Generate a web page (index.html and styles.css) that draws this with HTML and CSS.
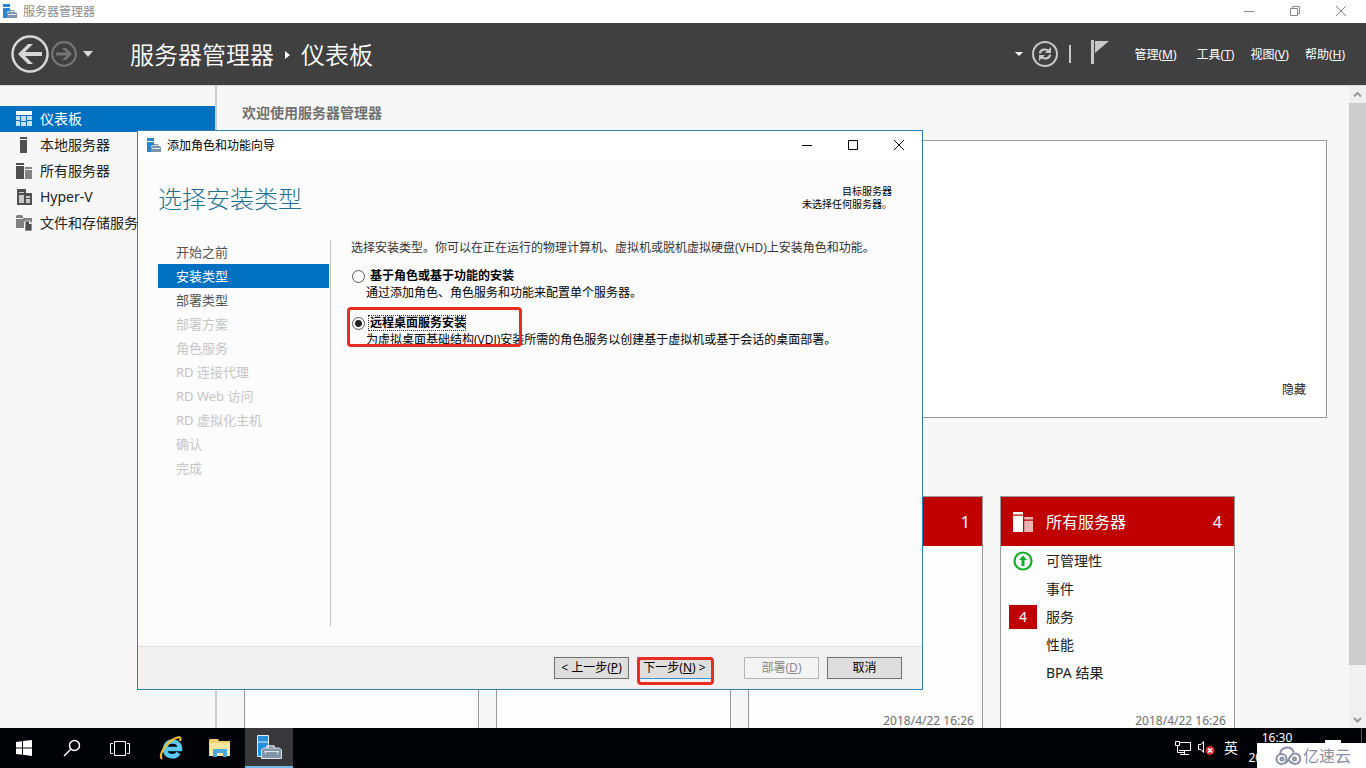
FILE: index.html
```html
<!DOCTYPE html>
<html lang="zh-CN">
<head>
<meta charset="utf-8">
<title>服务器管理器</title>
<link rel="stylesheet" href="styles.css">
</head>
<body>
<svg class="defs" aria-hidden="true">
  <symbol id="app" viewBox="0 0 15 15">
    <path fill="#2a86d0" d="M0 0h7v3H0zM0 4h7v3L4 8v6H0z"/>
    <path fill="#7d93ab" d="M4 9l2-1h6l2 1v5H4z"/>
    <path fill="none" stroke="#7d93ab" d="M7 8V6.500h4V8"/>
    <path stroke="#dfe8f0" d="M5 10.500h8"/>
  </symbol>
  <symbol id="servers" viewBox="0 0 16 16">
    <path fill="currentColor" d="M0 0h8v2H0zM0 3h8v13H0z"/>
    <path fill="currentColor" opacity=".7" d="M9 4h7v2H9zM9 7h7v9H9z"/>
  </symbol>
</svg>

<header class="titlebar">
  <svg class="app-icon" viewBox="0 0 15 15"><use href="#app"/></svg>
  <span class="titlebar-text">服务器管理器</span>
  <div class="caption">
    <button class="cap" aria-label="最小化"><svg viewBox="0 0 12 12"><path d="M1 6.500h10"/></svg></button>
    <button class="cap" aria-label="还原"><svg viewBox="0 0 12 12"><path d="M1.500 3.500h7v7h-7zM3.500 3V1.500h7v7H9"/></svg></button>
    <button class="cap" aria-label="关闭"><svg viewBox="0 0 12 12"><path d="M1 1l10 10M11 1L1 11"/></svg></button>
  </div>
</header>

<div class="toolbar">
  <button class="bare" aria-label="后退"><svg width="38" height="38" viewBox="0 0 38 38"><circle cx="19" cy="19" r="17.500" fill="none" stroke="#d6d6d6" stroke-width="2.500"/><path d="M7 19l10-10h5l-8 8h17v4H14l8 8h-5z" fill="#d6d6d6"/></svg></button>
  <button class="bare" aria-label="前进"><svg width="26" height="26" viewBox="0 0 26 26"><circle cx="13" cy="13" r="11.800" fill="none" stroke="#757575" stroke-width="2.200"/><path d="M21 13l-6-6h-4l4.500 4.500H5v3h10.500L11 19h4z" fill="#757575"/></svg></button>
  <button class="bare history" aria-label="历史记录"><svg width="12" height="6" viewBox="0 0 12 6"><path d="M1 0h10L6 6z" fill="#d6d6d6"/></svg></button>
  <div class="crumbs"><span>服务器管理器</span><svg width="5" height="8" viewBox="0 0 5 8"><path d="M0 0l5 4-5 4z" fill="#fff"/></svg><span>仪表板</span></div>
  <div class="actions">
    <button class="bare" aria-label="更多"><svg width="8" height="4" viewBox="0 0 8 4"><path d="M0 0h8L4 4z" fill="#fff"/></svg></button>
    <button class="bare" aria-label="刷新"><svg width="26" height="26" viewBox="0 0 26 26"><circle cx="13" cy="13" r="12" fill="none" stroke="#c8c8c8" stroke-width="2"/><g fill="none" stroke="#c8c8c8" stroke-width="2.200"><path d="M8 12.500c0-4 6-5.500 9-2"/><path d="M18 13.500c0 4-6 5.500-9 2"/></g><path fill="#c8c8c8" d="M19 6v6h-6zM7 20v-6h6z"/></svg></button>
    <span class="divider"></span>
    <button class="bare flag" aria-label="通知"><svg width="18" height="24" viewBox="0 0 18 24"><path fill="#c8c8c8" d="M0 0h3v24H0zM4 1h14L4 13z"/></svg></button>
    <nav class="menu">
      <button>管理(<u>M</u>)</button><button>工具(<u>T</u>)</button><button>视图(<u>V</u>)</button><button>帮助(<u>H</u>)</button>
    </nav>
  </div>
</div>

<div class="main">
  <nav class="sidebar">
    <a class="side current" href="#"><svg viewBox="0 0 16 16"><path fill="#fff" d="M0 0h16v4H0z"/><path fill="#c5def2" d="M0 5h4v4H0zM5 5h5v5H5zM11 5h5v4h-5zM0 10h4v5H0zM5 11h5v4H5zM11 10h5v5h-5z"/></svg>仪表板</a>
    <a class="side" href="#"><svg viewBox="0 0 16 16"><path fill="#505050" d="M4 0h7v2H4zM4 3h7v13H4z"/></svg>本地服务器</a>
    <a class="side" href="#"><svg viewBox="0 0 16 16"><use href="#servers"/></svg>所有服务器</a>
    <a class="side" href="#"><svg viewBox="0 0 16 16"><path fill="#505050" d="M1 0h9v4h6v12H1z"/><path fill="#c8c8c8" d="M3 3h5v1H3zM3 6h5v8H3zM10 7h4v2h-4zM10 10h4v4h-4z"/></svg>Hyper-V</a>
    <a class="side" href="#"><svg viewBox="0 0 16 16"><path fill="#808080" d="M0 1l1-1h5l1 1v2h9v4H8v6H0z"/><path fill="#f7f7f7" d="M0 3h7v1H0z"/><path fill="#505050" stroke="#f7f7f7" stroke-width=".7" d="M9 6h5l2 2v8H9z"/><path fill="#fff" d="M13 6v3h3z"/></svg>文件和存储服务</a>
  </nav>
  <main class="content">
    <h2 class="welcome-title">欢迎使用服务器管理器</h2>
    <section class="welcome"><button class="hide">隐藏</button></section>
    <div class="tiles">
      <section class="tile"><div class="tile-head"></div><div class="tile-foot"></div></section>
      <section class="tile"><div class="tile-head"></div><div class="tile-foot"></div></section>
      <section class="tile"><div class="tile-head"><span class="count">1</span></div><div class="tile-foot">2018/4/22 16:26</div></section>
      <section class="tile">
        <div class="tile-head"><svg width="20" height="20" viewBox="0 0 16 16"><use href="#servers"/></svg><span>所有服务器</span><span class="count">4</span></div>
        <ul class="rows">
          <li><span class="mark"><svg width="20" height="20" viewBox="0 0 20 20"><circle cx="10" cy="10" r="8.500" fill="none" stroke="#12ad2b" stroke-width="2.200"/><path fill="#12ad2b" d="M10 4.500l4 4.500h-2.500v6h-3V9H6z"/></svg></span>可管理性</li>
          <li><span class="mark"></span>事件</li>
          <li><span class="mark"><b class="alert">4</b></span>服务</li>
          <li><span class="mark"></span>性能</li>
          <li><span class="mark"></span>BPA 结果</li>
        </ul>
        <div class="tile-foot">2018/4/22 16:26</div>
      </section>
    </div>
  </main>
  <div class="scroll" aria-hidden="true">
    <svg viewBox="0 0 17 17"><path d="M5 10.500L8.500 7l3.500 3.500"/></svg>
    <div class="thumb"></div>
    <svg viewBox="0 0 17 17"><path d="M5 7l3.500 3.500L12 7"/></svg>
  </div>
</div>

<div class="dialog" role="dialog" aria-labelledby="dlg">
  <div class="dlg-title">
    <svg class="app-icon" viewBox="0 0 15 15"><use href="#app"/></svg><span id="dlg">添加角色和功能向导</span>
    <div class="caption dark">
      <button class="cap" aria-label="最小化"><svg viewBox="0 0 12 12"><path d="M1 6.500h10"/></svg></button>
      <button class="cap" aria-label="最大化"><svg viewBox="0 0 12 12"><path d="M1.500 1.500h9v9h-9z"/></svg></button>
      <button class="cap" aria-label="关闭"><svg viewBox="0 0 12 12"><path d="M1 1l10 10M11 1L1 11"/></svg></button>
    </div>
  </div>
  <div class="dlg-head">
    <h1>选择安装类型</h1>
    <p class="dest">目标服务器<br>未选择任何服务器。</p>
  </div>
  <div class="dlg-body">
    <ol class="steps">
      <li>开始之前</li><li class="active">安装类型</li><li>部署类型</li>
      <li class="off">部署方案</li><li class="off">角色服务</li><li class="off">RD 连接代理</li><li class="off">RD Web 访问</li><li class="off">RD 虚拟化主机</li><li class="off">确认</li><li class="off">完成</li>
    </ol>
    <div class="options">
      <p class="intro">选择安装类型。你可以在正在运行的物理计算机、虚拟机或脱机虚拟硬盘(VHD)上安装角色和功能。</p>
      <div class="option">
        <div class="choice"><input type="radio" name="kind" id="k1"><label for="k1">基于角色或基于功能的安装</label></div>
        <p>通过添加角色、角色服务和功能来配置单个服务器。</p>
      </div>
      <div class="option">
        <div class="choice"><input type="radio" name="kind" id="k2" checked><label for="k2" class="focused">远程桌面服务安装</label></div>
        <p>为虚拟桌面基础结构(VDI)安装所需的角色服务以创建基于虚拟机或基于会话的桌面部署。</p>
        <span class="outline outline-option"></span>
      </div>
    </div>
  </div>
  <div class="dlg-foot">
    <button class="btn">&lt; 上一步(<u>P</u>)</button>
    <div class="next"><button class="btn primary">下一步(<u>N</u>) &gt;</button><span class="outline outline-next"></span></div>
    <button class="btn deploy" disabled>部署(<u>D</u>)</button>
    <button class="btn">取消</button>
  </div>
</div>

<footer class="taskbar">
  <button class="task" aria-label="开始"><svg width="16" height="16" viewBox="0 0 16 16"><path fill="#fff" d="M0 2l6-.8v6.300H0zM7 1l9-1v7.500H7zM0 8.500h6v6.300L0 14zM7 8.500h9V16l-9-1.200z"/></svg></button>
  <button class="task" aria-label="搜索"><svg width="18" height="18" viewBox="0 0 18 18"><g fill="none" stroke="#fff" stroke-width="1.500"><circle cx="11.500" cy="6.500" r="5"/><path d="M8 10l-7 7"/></g></svg></button>
  <button class="task" aria-label="任务视图"><svg width="20" height="15" viewBox="0 0 20 15"><path fill="none" stroke="#fff" d="M4.500.5h11v14h-11zM3 2.500H.5v10H3M17 2.500h2.500v10H17"/></svg></button>
  <div class="pinned">
    <button class="task" aria-label="Internet Explorer"><svg width="24" height="24" viewBox="0 0 24 24"><path fill="none" stroke="#5cc8f5" stroke-width="4.500" d="M5.500 13h15.500c0-5-3.500-7.500-7.500-7.500A7 7.500 0 0 0 6 13c0 8 10 9.500 13.500 4"/><path fill="none" stroke="#f4c430" stroke-width="2" d="M3 23C-1 19 7 7 15 3c4-2.500 8-3 6 2"/></svg></button>
    <button class="task" aria-label="文件资源管理器"><svg width="22" height="20" viewBox="0 0 22 20"><path fill="#f0cf6b" d="M0 2l1-1h8l1 2h11v15H0z"/><path fill="#fbe7a0" d="M1 5h20v13H1z"/><path fill="#49a9dc" d="M4 11h14v8h-4v-4H8v4H4z"/></svg></button>
    <button class="task open" aria-label="服务器管理器"><svg width="25" height="25" viewBox="0 0 25 25"><path fill="#2190e0" stroke="#d8ecfa" d="M.5.500h11v21H.5z"/><path stroke="#d8ecfa" d="M1 7h10"/><path fill="none" stroke="#d8e0e8" stroke-width="1.500" d="M10 13v-2h7v2"/><path fill="#8295a7" stroke="#dce3ea" d="M4.500 15l2-2h16l2 2v8.500h-20z"/><path stroke="#dce3ea" d="M7 16.500h15M8.500 17v2M20.500 17v2"/></svg></button>
  </div>
  <div class="tray">
    <svg width="16" height="14" viewBox="0 0 16 14"><path fill="none" stroke="#fff" d="M5 1.500h10.500v8H4M9.500 10v3M5 13.500h9M.5.500h4v4h-4zM2.500 5v6.500H9"/></svg>
    <svg width="17" height="16" viewBox="0 0 17 16"><path fill="none" stroke="#fff" d="M5.500 12.500L3 9.500H.5v-5H3l2.500-3z"/><circle cx="12" cy="10.500" r="4.500" fill="#df2b35"/><path stroke="#fff" stroke-width="1.500" d="M10 8.500l4 4M14 8.500l-4 4"/></svg>
    <span class="ime">英</span>
    <time class="clock">16:30<br>2018/4/22</time>
    <span class="peek"></span>
  </div>
  <span class="note"></span>
  <div class="brand">
    <svg width="26" height="20" viewBox="0 0 26 20"><g fill="none" stroke="#8b8fa3" stroke-width="2"><path d="M5 8.500C5 4 8.500 1.500 12 1.500c3.500 0 6 2 6.500 5"/><circle cx="6.500" cy="13" r="5"/><path d="M10 17c4-1 5-10 10-9.500a5 5 0 0 1 0 10.500c-3 0-4-1.500-6-3.500"/><circle cx="7" cy="13" r="1.500"/><circle cx="19.500" cy="13" r="1.500"/></g></svg>
    <span>亿速云</span>
  </div>
</footer>
</body>
</html>
```

FILE: styles.css
```css
* { box-sizing: border-box; }
html, body { height: 100%; }
body {
  margin: 0;
  display: flex;
  flex-direction: column;
  position: relative;
  overflow: hidden;
  background: #f7f7f7;
  color: #222;
  font: 14px/20px "Noto Sans", "Noto Sans CJK SC", sans-serif;
}
button { font: inherit; color: inherit; padding: 0; border: 0; background: none; }
h1, h2, p, ol, ul { margin: 0; padding: 0; }
ol, ul { list-style: none; }
svg { display: block; flex: none; }
.defs { position: absolute; width: 0; height: 0; }

/* window frame */
.titlebar { display: flex; align-items: center; height: 23px; padding: 0 2px 0 3px; background: #fff; color: #8a8a8a; font-size: 12px; flex: none; }
.app-icon { width: 15px; height: 15px; margin-right: 5px; }
.caption { display: flex; margin-left: auto; color: #888; }
.cap { width: 46px; height: 20px; padding-bottom: 2px; display: grid; place-items: center; }
.cap svg { width: 12px; height: 12px; fill: none; stroke: currentColor; }
.caption.dark { color: #000; }

.toolbar { display: flex; align-items: center; height: 62px; padding: 0 21px 0 11px; background: #404040; color: #fff; flex: none; }
.bare { display: block; }
.toolbar .bare + .bare { margin-left: 2px; }
.toolbar .bare + .history { margin-left: 5px; }
.crumbs { display: flex; align-items: center; gap: 11px; margin-left: 36px; padding-top: 1px; font-size: 24px; line-height: 32px; font-weight: 350; }
.actions { display: flex; align-items: center; margin-left: auto; font-size: 12px; }
.toolbar .actions .bare + .bare { margin-left: 9px; }
.divider { width: 2px; height: 18px; margin: 0 20px 0 11px; background: #c8c8c8; }
.flag { margin: -4px 25px 0 0; }
.menu { display: flex; gap: 16px; padding-top: 1px; }
.menu button:first-child { margin-right: 4px; }

/* main area */
.main { display: flex; flex: 1; min-height: 0; border-top: 1px solid #d9d9d9; }
.sidebar { width: 217px; flex: none; padding-top: 20px; border-right: 2px solid #cfcfcf; }
.side { display: flex; align-items: center; gap: 8px; height: 26px; padding-left: 16px; color: #222; text-decoration: none; white-space: nowrap; }
.side svg { width: 16px; height: 16px; color: #505050; }
.side.current { background: #0070c0; color: #fff; }
.content { flex: 1; min-width: 0; overflow: hidden; padding: 16px 22px 0 27px; }
.welcome-title { margin-left: -2px; font-size: 14px; line-height: 22px; font-weight: 700; color: #707070; }
.welcome { display: flex; align-items: flex-end; justify-content: flex-end; height: 278px; margin-top: 16px; padding: 0 20px 17px; border: 1px solid #999; background: #fff; font-size: 12px; }
.tiles { display: flex; gap: 17px; margin-top: 78px; }
.tile { display: flex; flex-direction: column; width: 235px; height: 232px; flex: none; border: 1px solid #999; border-bottom: 0; background: #fdfdfd; }
.tile-head { display: flex; align-items: center; gap: 13px; height: 49px; padding: 0 12px; background: #c00000; color: #fff; font-size: 16px; }
.count { margin-left: auto; }
.rows { margin-top: 1px; }
.rows li { display: flex; align-items: center; gap: 9px; height: 28px; padding-left: 8px; }
.mark { display: grid; place-items: center; width: 28px; height: 24px; }
.alert { width: 28px; background: #c00000; color: #fff; font-weight: 400; text-align: center; line-height: 24px; }
.tile-foot { margin-top: auto; padding: 0 8px; text-align: right; color: #6d6d6d; font-size: 12px; line-height: 14px; }
.scroll { display: flex; flex-direction: column; width: 17px; flex: none; background: #f0f0f0; }
.scroll svg { width: 17px; height: 17px; fill: none; stroke: #999; stroke-width: 2; }
.thumb { flex: 1; margin-bottom: 46px; background: #cdcdcd; }

/* wizard window */
.dialog { position: absolute; left: 137px; top: 130px; width: 786px; height: 560px; display: flex; flex-direction: column; border: 1px solid #2a7fbd; background: #fcfcfc; color: #000; font-size: 12px; }
.dlg-title { display: flex; align-items: center; height: 29px; padding-left: 9px; background: #fff; }
.dlg-head { display: flex; justify-content: space-between; padding: 23px 30px 0 20px; height: 80px; }
.dlg-head h1 { font-size: 24px; line-height: 32px; font-weight: 300; color: #1f6f8f; }
.dest { font-size: 10px; line-height: 13px; text-align: right; padding-top: 2px; }
.dlg-body { display: flex; flex: 1; padding: 0 20px 20px; }
.steps { width: 173px; padding-right: 1px; border-right: 1px solid #c3c3c3; font-size: 13px; line-height: 24px; color: #555; }
.steps li { padding-left: 18px; }
.steps .active { background: #0070c0; color: #fff; }
.steps .off { color: #c6c6c6; }
.options { padding-left: 20px; line-height: 16px; white-space: nowrap; font-family: "Open Sans", "Noto Sans CJK SC", sans-serif; }
.intro { color: #333; margin-bottom: 11px; }
.option { position: relative; margin-bottom: 13px; }
.choice { display: flex; align-items: center; gap: 3px; height: 18px; font-weight: 700; }
.choice input { appearance: none; width: 13px; height: 13px; margin: 0 0 0 1px; border: 1px solid #555; border-radius: 50%; background: #fff; }
.choice input:checked { background: radial-gradient(circle, #222 0 3px, #fff 4px); }
.choice label { padding-left: 2px; }
.choice .focused { outline: 1px dotted #333; outline-offset: -1px; }
.option p { padding-left: 15px; }
.outline { position: absolute; border: 3px solid #e82c22; border-radius: 4px; pointer-events: none; }
.outline-option { left: -4px; top: -7px; width: 175px; height: 40px; }
.dlg-foot { display: flex; align-items: flex-start; justify-content: flex-end; gap: 8px; height: 43px; padding: 10px 20px 0; border-top: 1px solid #dfdfdf; background: #f0f0f0; }
.btn { width: 75px; height: 22px; border: 1px solid #707070; background: #dedede; line-height: 20px; white-space: nowrap; }
.primary { border-color: #3a96dc; }
.next { position: relative; }
.outline-next { left: 0; top: 0; width: 77px; height: 28px; }
.deploy { margin-left: 24px; border-color: #b5b5b5; background: #f4f4f4; color: #888; }

/* taskbar */
.taskbar { position: relative; display: flex; height: 40px; flex: none; background: #020306; color: #fff; }
.task { display: grid; place-items: center; width: 48px; height: 40px; }
.pinned { display: flex; gap: 1px; margin-left: 3px; }
.open { background: #38383a; border-bottom: 2px solid #76b9ed; }
.tray { display: flex; align-items: center; gap: 7px; margin-left: auto; }
.ime { font-size: 14px; margin-left: 2px; }
.clock { font-size: 12px; line-height: 20px; width: 60px; text-align: center; margin-left: 2px; }
.peek { align-self: stretch; width: 5px; margin-left: 47px; border-left: 1px solid #555; }
.note { position: absolute; right: 25px; bottom: 24px; width: 16px; height: 4px; background: #fff; }
.brand { position: absolute; right: 0; bottom: 0; display: flex; align-items: center; gap: 2px; width: 109px; height: 25px; padding-left: 18px; background: #fff; color: #8b8fa3; font-size: 16px; }
```
